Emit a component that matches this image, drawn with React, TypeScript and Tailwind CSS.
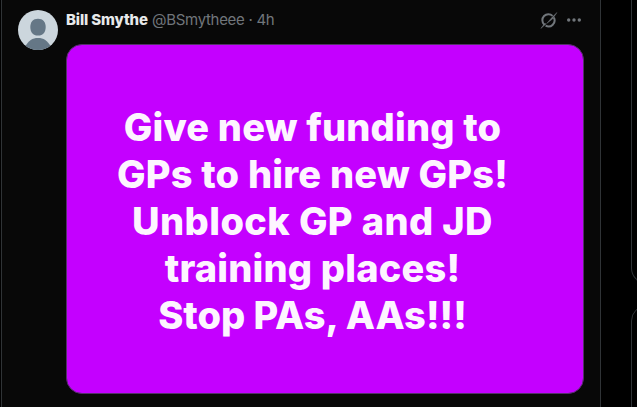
const AUTHOR = { name: "Bill Smythe", handle: "@BSmytheee", time: "4h" };

const LINES = [
  { text: "Give new funding to", className: "tracking-[0.18px]" },
  { text: "GPs to hire new GPs!", className: "tracking-[0.22px]" },
  { text: "Unblock GP and JD", className: "tracking-[0.38px]" },
  { text: "training places!", className: "tracking-[0.18px]" },
  { text: "Stop PAs, AAs!!!", className: "tracking-[0.02px]" },
];

const Avatar = () => (
  <svg viewBox="0 0 40 40" className="w-10 h-10 rounded-full shrink-0">
    <rect width="40" height="40" fill="#ccd6dd" />
    <path d="M20 8.800c-5 0-7.700 3.400-7.700 8.200 0 5 2.600 8.600 7.700 8.600s7.700-3.600 7.700-8.600c0-4.800-2.700-8.200-7.700-8.200z" fill="#657786" />
    <path d="M7.200 36.500C10.500 30.500 14.500 28 20 28s9.500 2.500 12.800 8.500L28 40H12z" fill="#657786" />
  </svg>
);

const GrokIcon = () => (
  <svg viewBox="0 0 18 18" className="w-[18px] h-[18px]" fill="none" stroke="#71767b">
    <path d="M4.200 13.600A6 6 0 0 1 12.600 4.900" strokeWidth="2" />
    <path d="M13.800 6.600A6 6 0 0 1 5.600 14.700" strokeWidth="2" />
    <path d="M17 1.500 12.500 8 6.800 12.400 12 6.300zM6.300 12.800 0.800 17.500l3.800-5z" fill="#71767b" stroke="#71767b" strokeWidth="0.400" />
  </svg>
);

const MoreIcon = () => (
  <svg viewBox="0 0 16 6" className="w-4 h-1.5" fill="#71767b">
    <circle cx="2.700" cy="3" r="1.700" />
    <circle cx="8" cy="3" r="1.700" />
    <circle cx="13.300" cy="3" r="1.700" />
  </svg>
);

const Post = () => (
  <article className="flex w-[600px] h-full shrink-0 ml-px pl-4 pt-2.5 gap-2 border-x border-[#2f3336] bg-[#080808]">
    <Avatar />
    <div className="w-[518px]">
      <div className="flex items-center justify-between h-5 pr-0.5">
        <div className="flex items-center text-[15px] leading-5 whitespace-nowrap">
          <span className="w-[82px] font-extrabold text-[#e7e9ea] tracking-[-0.15px]">{AUTHOR.name}</span>
          <span className="ml-1 text-[#71767b] tracking-[-0.3px]">{AUTHOR.handle} · {AUTHOR.time}</span>
        </div>
        <div className="flex items-center gap-2">
          <GrokIcon />
          <MoreIcon />
        </div>
      </div>
      <div className="mt-3.5 h-[350px] pt-[59px] pr-[25px] rounded-2xl border border-[#53306a] bg-[#c400ff] text-center text-[38px] leading-[47px] font-extrabold text-[#fdf5ff] whitespace-nowrap">
        {LINES.map((line) => (
          <p key={line.text} className={line.className}>{line.text}</p>
        ))}
      </div>
    </div>
  </article>
);

const Sidebar = () => (
  <aside className="flex flex-col gap-[21px] w-80 h-full shrink-0 ml-[30px]">
    <div className="h-[284px] shrink-0 border border-t-0 border-[#2f3336] rounded-b-2xl" />
    <div className="h-40 shrink-0 border border-[#2f3336] rounded-t-2xl" />
  </aside>
);

export default function App() {
  return (
    <main className="flex w-[637px] h-[407px] overflow-hidden bg-black font-['Inter','Liberation_Sans',sans-serif]">
      <Post />
      <Sidebar />
    </main>
  );
}
